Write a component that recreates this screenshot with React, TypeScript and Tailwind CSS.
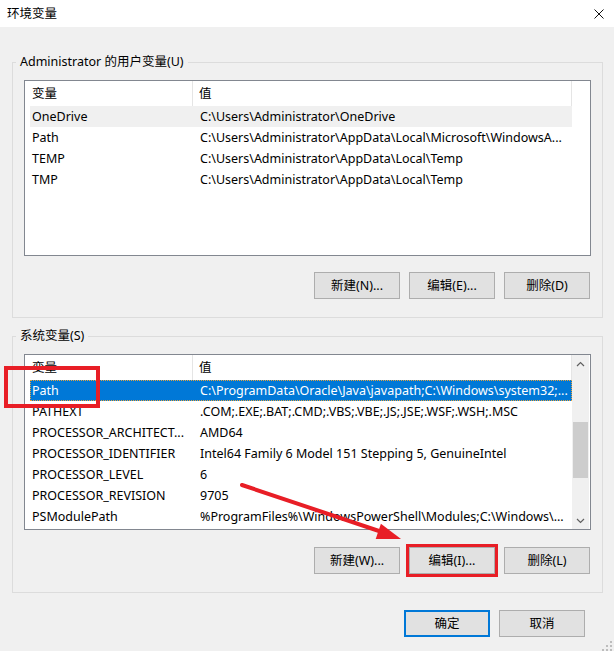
import React from 'react'

type Row = [string, string]

const userVars: Row[] = [
  ['OneDrive', 'C:\\Users\\Administrator\\OneDrive'],
  ['Path', 'C:\\Users\\Administrator\\AppData\\Local\\Microsoft\\WindowsA...'],
  ['TEMP', 'C:\\Users\\Administrator\\AppData\\Local\\Temp'],
  ['TMP', 'C:\\Users\\Administrator\\AppData\\Local\\Temp'],
]

const systemVars: Row[] = [
  ['Path', 'C:\\ProgramData\\Oracle\\Java\\javapath;C:\\Windows\\system32;...'],
  ['PATHEXT', '.COM;.EXE;.BAT;.CMD;.VBS;.VBE;.JS;.JSE;.WSF;.WSH;.MSC'],
  ['PROCESSOR_ARCHITECT...', 'AMD64'],
  ['PROCESSOR_IDENTIFIER', 'Intel64 Family 6 Model 151 Stepping 5, GenuineIntel'],
  ['PROCESSOR_LEVEL', '6'],
  ['PROCESSOR_REVISION', '9705'],
  ['PSModulePath', '%ProgramFiles%\\WindowsPowerShell\\Modules;C:\\Windows\\...'],
]

function Chevron({ up }: { up?: boolean }) {
  return (
    <svg width="9" height="6" viewBox="0 0 9 6" className={up ? '' : 'rotate-180'}>
      <path d="M1 5 L4.5 1.5 L8 5" fill="none" stroke="#606060" strokeWidth="1.2" />
    </svg>
  )
}

function ListView({
  rows,
  selected,
  focused,
  scrollbar,
}: {
  rows: Row[]
  selected: number
  focused?: boolean
  scrollbar?: boolean
}) {
  return (
    <div className="w-[567px] h-[176px] border border-[#828790] bg-white flex">
      <div className="w-[547px] flex flex-col">
        {/* header */}
        <div className="h-[25px] flex shrink-0">
          <div className="w-[168px] pl-[7px] flex items-center border-r border-[#e5e5e5]">变量</div>
          <div className="w-[379px] pl-[6px] flex items-center border-r border-[#e5e5e5]">值</div>
        </div>
        {rows.map(([name, value], idx) => {
          const isSel = idx === selected
          let rowCls = ''
          if (isSel && focused) rowCls = 'bg-[#0078d7] text-white outline-1 outline-dotted outline-[#e8a33d] -outline-offset-1'
          else if (isSel) rowCls = 'bg-[#f0f0f0]'
          return (
            <div key={name} className={`ml-[5px] w-[542px] h-[21px] shrink-0 flex items-center whitespace-nowrap ${rowCls}`}>
              <div className="w-[163px] shrink-0 pl-[2px]">{name}</div>
              <div className="pl-[7px]">{value}</div>
            </div>
          )
        })}
      </div>
      {scrollbar && (
        <div className="w-[17px] bg-[#f0f0f0] flex flex-col">
          <div className="h-[17px] flex items-center justify-center">
            <Chevron up />
          </div>
          <div className="flex-1 px-[1px]">
            <div className="mt-[50px] h-[56px] bg-[#cdcdcd]" />
          </div>
          <div className="h-[17px] flex items-center justify-center">
            <Chevron />
          </div>
        </div>
      )}
    </div>
  )
}

function Button({ label, primary, marked }: { label: string; primary?: boolean; marked?: boolean }) {
  const borderCls = primary ? 'border-2 border-[#0078d7]' : 'border border-[#adadad]'
  const markCls = marked ? 'outline-[3px] outline-solid outline-[#e81e26]' : ''
  return (
    <button
      className={`w-[86px] h-[27px] bg-[#e1e1e1] flex items-center justify-center text-[12.5px] text-black font-['Noto_Sans','Noto_Sans_CJK_SC',sans-serif] ${borderCls} ${markCls}`}
    >
      {label}
    </button>
  )
}

function Group({ title, children, className = '' }: { title: string; children: React.ReactNode; className?: string }) {
  return (
    <fieldset className={`w-[591px] border border-[#dcdcdc] ${className}`}>
      <legend className="ml-[3px] px-[4px] leading-[16px]">{title}</legend>
      <div className="pt-[10px] px-[11px] pb-[18px]">{children}</div>
    </fieldset>
  )
}

export default function App() {
  return (
    <div className="relative w-[614px] h-[651px] overflow-hidden bg-[#f0f0f0] text-[12.5px] text-black leading-[16px] font-['Noto_Sans','Noto_Sans_CJK_SC',sans-serif]">
      {/* title bar */}
      <div className="h-[27px] bg-white flex items-center justify-between pl-[7px] pr-[10px]">
        <span>环境变量</span>
        <svg width="10" height="10" viewBox="0 0 10 10">
          <path d="M0.5 0.5 L9.5 9.5 M9.5 0.5 L0.5 9.5" stroke="#111" strokeWidth="1" />
        </svg>
      </div>

      <div className="px-[12px] pt-[27px]">
        <Group title="Administrator 的用户变量(U)">
          <ListView rows={userVars} selected={0} />
          <div className="mt-[16px] flex justify-end gap-[9px] pr-[1px]">
            <Button label="新建(N)..." />
            <Button label="编辑(E)..." />
            <Button label="删除(D)" />
          </div>
        </Group>

        <Group title="系统变量(S)" className="mt-[10px]">
          <ListView rows={systemVars} selected={0} focused scrollbar />
          <div className="mt-[17px] flex justify-end gap-[9px] pr-[1px]">
            <Button label="新建(W)..." />
            <Button label="编辑(I)..." marked />
            <Button label="删除(L)" />
          </div>
        </Group>
      </div>

      <div className="mt-[17px] flex justify-end gap-[9px] pr-[29px]">
        <Button label="确定" primary />
        <Button label="取消" />
      </div>

      {/* annotations */}
      <div className="absolute left-[4px] top-[366px] w-[96px] h-[42px] border-[4px] border-[#e81e26]" />
      <svg className="absolute left-0 top-0 pointer-events-none" width="614" height="651">
        <line x1="242" y1="485" x2="379" y2="531" stroke="#e81e26" strokeWidth="4" strokeLinecap="round" />
        <polygon points="401,539 375.7,538.9 380.9,523.7" fill="#e81e26" />
        <g fill="#bdbdbd">
          <rect x="610" y="641" width="2" height="2" />
          <rect x="606" y="645" width="2" height="2" />
          <rect x="610" y="645" width="2" height="2" />
          <rect x="602" y="649" width="2" height="2" />
          <rect x="606" y="649" width="2" height="2" />
          <rect x="610" y="649" width="2" height="2" />
        </g>
      </svg>
    </div>
  )
}
